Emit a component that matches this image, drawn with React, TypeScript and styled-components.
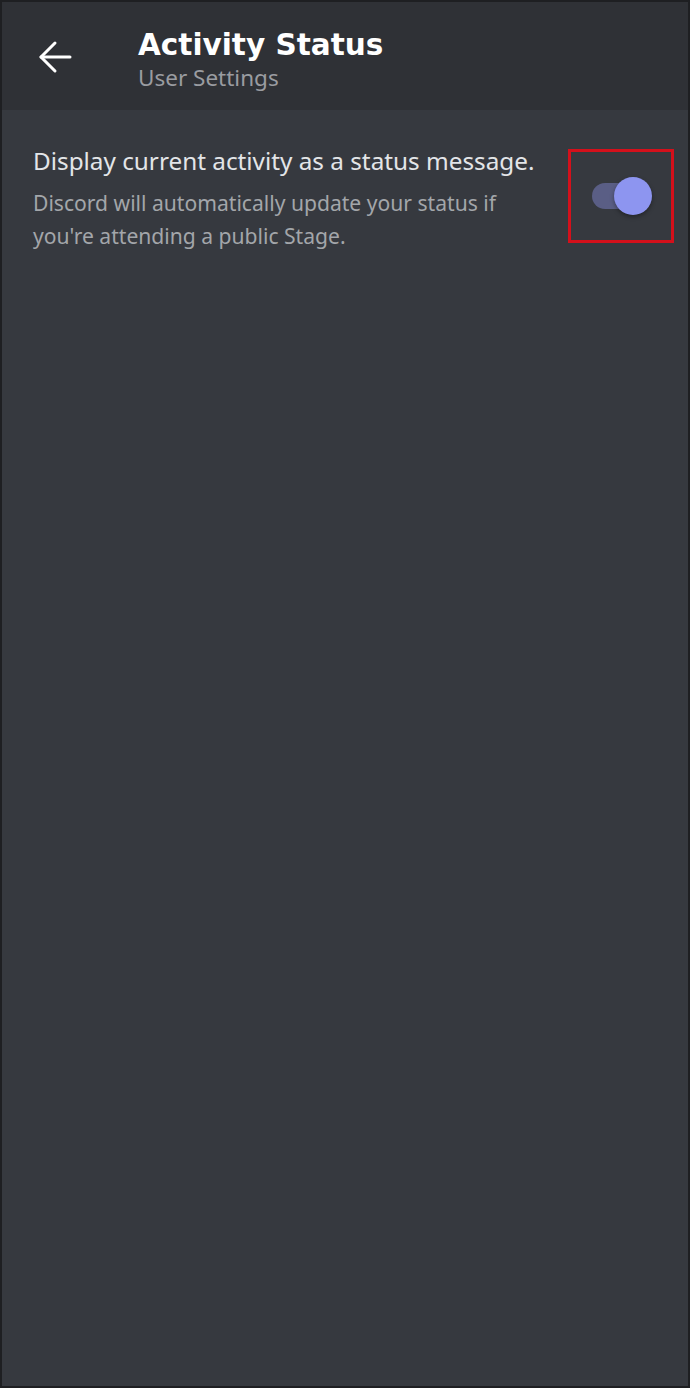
import React, { useState } from 'react'
import styled, { createGlobalStyle } from 'styled-components'

const GlobalStyle = createGlobalStyle`
  html, body {
    margin: 0;
    padding: 0;
    background: #1e1f22;
  }
  * { box-sizing: border-box; }
`

const Screen = styled.div`
  width: 690px;
  height: 1388px;
  display: flex;
  flex-direction: column;
  background: #36393f;
  border: 2px solid #1e1f22;
  font-family: "Noto Sans", "Open Sans", sans-serif;
  overflow: hidden;
`

const Header = styled.header`
  height: 108px;
  background: #2f3136;
  display: flex;
  align-items: center;
  padding-left: 36px;
  gap: 66px;
  flex-shrink: 0;
`

const BackButton = styled.button`
  background: none;
  border: 0;
  padding: 0;
  width: 34px;
  height: 34px;
  display: flex;
  align-items: center;
  justify-content: center;
  color: #ffffff;
  cursor: pointer;
  margin-top: 2px;
`

const Titles = styled.div`
  display: flex;
  flex-direction: column;
  margin-top: 6px;
`

const Title = styled.h1`
  margin: 0;
  color: #ffffff;
  font-family: "DejaVu Sans", "Noto Sans", sans-serif;
  font-size: 29.5px;
  font-weight: 700;
  line-height: 37px;
`

const Subtitle = styled.div`
  color: #9a9ca1;
  font-size: 22.5px;
  line-height: 28px;
`

const Content = styled.main`
  flex: 1;
  padding: 36px 14px 0 31px;
`

const SettingRow = styled.div`
  display: flex;
  align-items: flex-start;
  justify-content: space-between;
`

const SettingText = styled.div`
  display: flex;
  flex-direction: column;
  gap: 10px;
  max-width: 515px;
`

const SettingLabel = styled.div`
  color: #e3e5e8;
  font-size: 24.3px;
  line-height: 30px;
`

const SettingDescription = styled.div`
  color: #a3a6aa;
  font-size: 21.1px;
  line-height: 33px;
`

const Highlight = styled.div`
  width: 106px;
  height: 94px;
  border: 3px solid #d4101b;
  display: flex;
  align-items: center;
  justify-content: center;
  margin-top: 3px;
  flex-shrink: 0;
`

const Track = styled.button<{ $on: boolean }>`
  position: relative;
  width: 50px;
  height: 26px;
  border-radius: 13px;
  border: 0;
  padding: 0;
  cursor: pointer;
  background: ${p => (p.$on ? '#5a5e85' : '#72767d')};
  margin-left: -8px;
`

const Knob = styled.span<{ $on: boolean }>`
  position: absolute;
  top: 50%;
  left: ${p => (p.$on ? '22px' : '-10px')};
  width: 38px;
  height: 38px;
  margin-top: -19px;
  border-radius: 50%;
  background: ${p => (p.$on ? '#8d95f0' : '#e3e5e8')};
  box-shadow: 0 2px 4px rgba(0, 0, 0, 0.35);
`

export default function App() {
  const [on, setOn] = useState(true)
  return (
    <>
      <GlobalStyle />
      <Screen>
        <Header>
          <BackButton aria-label="Back">
            <svg width="34" height="34" viewBox="0 0 34 34" fill="none" stroke="currentColor" strokeWidth="3" strokeLinecap="round" strokeLinejoin="round">
              <path d="M3 17H32" />
              <path d="M17 3L3 17L17 31" />
            </svg>
          </BackButton>
          <Titles>
            <Title>Activity Status</Title>
            <Subtitle>User Settings</Subtitle>
          </Titles>
        </Header>
        <Content>
          <SettingRow>
            <SettingText>
              <SettingLabel>Display current activity as a status message.</SettingLabel>
              <SettingDescription>
                Discord will automatically update your status if you're attending a public Stage.
              </SettingDescription>
            </SettingText>
            <Highlight>
              <Track $on={on} onClick={() => setOn(!on)} aria-pressed={on}>
                <Knob $on={on} />
              </Track>
            </Highlight>
          </SettingRow>
        </Content>
      </Screen>
    </>
  )
}
